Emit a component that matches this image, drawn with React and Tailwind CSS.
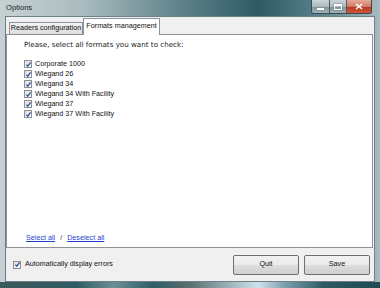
import React from 'react';

const Check = ({ className = '' }) => (
  <span className={`relative inline-flex h-[8px] w-[8px] shrink-0 items-center justify-center border border-[#8e8f8f] bg-[linear-gradient(135deg,#dcdcdc,#ffffff)] ${className}`}>
    <svg width="7" height="7" viewBox="0 0 7 7" className="absolute">
      <path d="M1.4 3.6 L2.8 5.2 L5.6 1.4" fill="none" stroke="#2a4a9a" strokeWidth="1.2" />
    </svg>
  </span>
);

const formats = [
  'Corporate 1000',
  'Wiegand 26',
  'Wiegand 34',
  'Wiegand 34 With Facility',
  'Wiegand 37',
  'Wiegand 37 With Facility',
];

const Button = ({ children }) => (
  <button className="flex h-[20px] w-[66px] items-center justify-center rounded-[2px] border border-[#707070] bg-[linear-gradient(180deg,#f2f2f2_0%,#ebebeb_48%,#dddddd_52%,#cfcfcf_100%)] text-[7.2px] text-[#111]">
    {children}
  </button>
);

export default function App() {
  return (
    <div className="flex h-[288px] w-[380px] flex-col overflow-hidden bg-[linear-gradient(90deg,#c7d1d4_0%,#a9bbbf_22%,#5d8189_48%,#2f5a64_68%,#56808a_84%,#a9bbc0_100%)] font-['Liberation_Sans',Arial,sans-serif]">
      {/* Title bar */}
      <div className="relative flex h-[16px] shrink-0 items-center pl-[6px]">
        <span className="text-[7.6px] text-[#1c1c1c]">Options</span>
        <div className="absolute right-[8px] top-0 flex h-[14px] overflow-hidden rounded-b-[3px] border border-t-0 border-[#3a4c52]">
          <div className="flex w-[18px] items-center justify-center border-r border-[#4b5d62] bg-[linear-gradient(180deg,#c9d4d8_0%,#aab9be_50%,#7f949a_52%,#9fb3b8_100%)]">
            <span className="mt-[4px] h-[2px] w-[7px] bg-white shadow-[0_0_1px_#333]" />
          </div>
          <div className="flex w-[17px] items-center justify-center border-r border-[#4b5d62] bg-[linear-gradient(180deg,#c9d4d8_0%,#aab9be_50%,#7f949a_52%,#9fb3b8_100%)]">
            <span className="h-[6px] w-[8px] border border-t-2 border-white shadow-[0_0_1px_#333]" />
          </div>
          <div className="flex w-[24px] items-center justify-center bg-[linear-gradient(180deg,#e6a99a_0%,#d27a66_50%,#b8351c_52%,#d4583a_100%)]">
            <svg width="8" height="7" viewBox="0 0 8 7">
              <path d="M1 1 L7 6 M7 1 L1 6" stroke="#fff" strokeWidth="1.6" />
            </svg>
          </div>
        </div>
      </div>

      {/* Middle */}
      <div className="flex flex-1 px-[5px]">
        <div className="flex flex-1 flex-col border border-[#6f8186] bg-[#f0f0f0]">
          {/* Tabs */}
          <div className="flex h-[17px] shrink-0 items-end pl-[3px]">
            <div className="flex h-[12px] w-[74px] items-center justify-center border border-b-0 border-[#8e9196] bg-[linear-gradient(180deg,#f3f3f3,#dcdcdc)] text-[7.2px] text-[#111]">
              Readers configuration
            </div>
            <div className="relative z-10 -mb-[1px] flex h-[17px] w-[77px] items-center justify-center border border-b-0 border-[#8e9196] bg-white pb-[2px] text-[7.2px] text-[#111]">
              Formats management
            </div>
          </div>

          {/* Panel */}
          <div className="mr-[1px] flex h-[214px] shrink-0 flex-col border border-[#8e9196] bg-white pl-[17px] pt-[6px] pb-[5px]">
            <div className="flex h-[8px] items-center pl-[0px] font-['DejaVu_Sans',sans-serif] text-[7.15px] text-[#222]">
              Please, select all formats you want to check:
            </div>
            <div className="mt-[10px] flex flex-col">
              {formats.map((f) => (
                <div key={f} className="flex h-[10px] items-center gap-[3px]">
                  <Check />
                  <span className="text-[7.2px] leading-none text-[#111]">{f}</span>
                </div>
              ))}
            </div>
            <div className="mt-auto flex h-[8px] items-center gap-[5px] pl-[2px] text-[7.2px]">
              <span className="text-[#1f3fd0] underline">Select all</span>
              <span className="text-[#444]">/</span>
              <span className="text-[#1f3fd0] underline">Deselect all</span>
            </div>
          </div>

          {/* Bottom row */}
          <div className="flex flex-1 items-center pl-[7px] pr-[4px]">
            <Check />
            <span className="ml-[4px] text-[7.2px] text-[#111]">Automatically display errors</span>
            <div className="ml-auto flex gap-[5px]">
              <Button>Quit</Button>
              <Button>Save</Button>
            </div>
          </div>
        </div>
      </div>

      {/* Bottom frame */}
      <div className="h-[6px] shrink-0 bg-[linear-gradient(90deg,#3c5a5a_0%,#2e5b63_20%,#6d8f95_30%,#2f5e69_40%,#5a6f70_50%,#cfe3ee_68%,#7aa0ad_75%,#2f5a64_85%,#1f4a55_100%)]" />
    </div>
  );
}
